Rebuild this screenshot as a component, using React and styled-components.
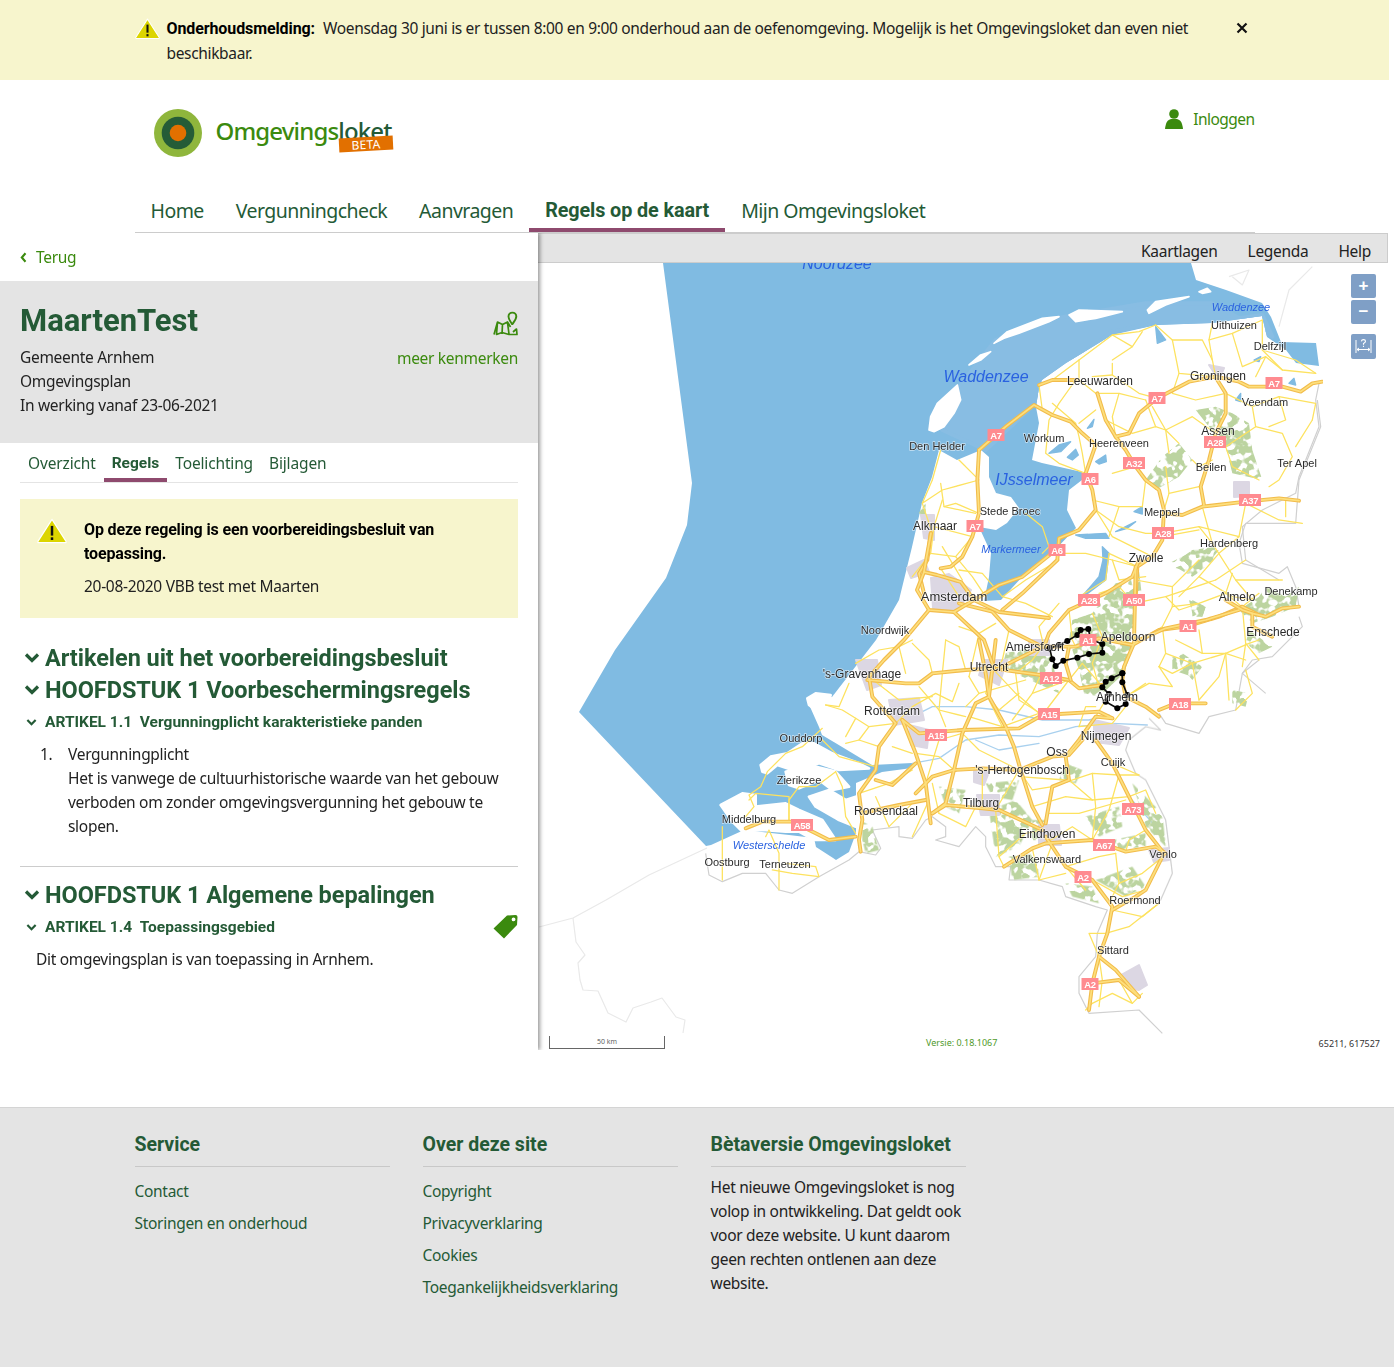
import React from "react";
import styled, { createGlobalStyle } from "styled-components";

const DARK = "#245a36";
const GREEN = "#3b8a0e";
const GREY = "#e4e4e4";
const CREAM = "#f7f5cd";
const PURPLE = "#8e4a6e";
const BOLD_FONT = `Roboto, "Noto Sans", sans-serif`;

const GlobalStyle = createGlobalStyle`
  html, body { margin: 0; padding: 0; background: #fff; }
  body {
    font-family: "Noto Sans", "Liberation Sans", sans-serif;
    font-size: 15.5px;
    line-height: 24px;
    letter-spacing: -0.3px;
    color: #222;
  }
  a { color: inherit; text-decoration: none; }
`;

// map data, in page pixels unless the group says otherwise
const SEA =
  "M664,263 L1192,263 L1197,280 L1227,290 L1263,303 L1272,317 L1282,342 L1317,343 L1320,366 L1297,363 L1287,350 L1268,337 L1263,316 L1213,323 L1157,325 L1113,335 L1067,363 L1043,380 L1040,387 L1037,407 L1040,423 L1033,460 L1043,463 L1083,472 L1083,480 L1070,490 L1068,510 L1077,528 L1053,553 L1023,577 L1002,600 L985,601 L990,577 L992,553 L980,527 L997,530 L1008,523 L1020,508 L1012,497 L997,493 L990,477 L990,457 L982,450 L958,460 L940,450 L933,477 L923,503 L913,547 L900,600 L877,640 L833,697 L808,700 L820,727 L823,735 L873,765 L913,763 L913,768 L883,772 L857,783 L857,793 L857,833 L850,852 L837,860 L817,847 L815,838 L790,835 L745,830 L712,845 L707,846 L580,712 L616,650 L667,578 L688,525 L693,483 Z";

const WADDEN_TINT = "320,570 470,430 490,370 700,215 830,190 1000,185 1150,165 1180,230 1000,130 800,130 500,180 350,240 240,380 245,430 190,510";
const ISLANDS_Z7 = [
  "345,250 385,215 490,175 540,170 510,185 420,220 375,235",
  "570,165 600,150 730,155 650,175 590,185",
  "805,150 830,125 930,110 860,135 810,160",
  "150,510 155,470 175,430 235,375 245,420 225,460 195,500 165,515",
  "270,315 305,285 335,275 305,300",
  "960,95 985,85 995,95 970,100",
];
const LAKES_Z7 = [
  "510,580 540,555 575,545 545,575",
  "565,592 590,568 598,585 580,600",
  "625,505 645,478 640,500",
  "650,605 680,585 682,605 660,612",
  "710,815 770,785 745,805",
  "765,755 790,740 790,762",
  "830,200 860,240 835,250",
  "1070,420 1085,400 1085,425",
  "1125,300 1145,290 1140,305",
  "1230,370 1245,355 1250,375",
  "590,825 680,820 690,835 620,835",
  "670,860 690,880 680,960 600,1020 660,950 672,900",
];
const DELTA_Z8 = [
  "185,375 215,350 265,340 310,310 345,310 400,340 480,370 510,385 420,390 360,370 320,385 280,390 235,375 205,400 190,395",
  "260,395 330,375 410,395 450,440 400,450 360,420 300,445 270,435",
  "330,470 390,450 440,480 470,470 470,560 420,540 350,500",
  "65,495 130,460 170,465 170,500 260,490 300,510 370,540 410,600 345,600 300,575 260,575 190,570 130,575 100,545",
  "325,175 350,160 395,165 385,195 350,210 330,195",
];

const BORDERS = [
  { scale: 1, x: 0, y: 0, light: true, pts: "540,927 574,918 607,900 650,875 708,848" },
  { scale: 1, x: 0, y: 0, light: true, pts: "574,918 577,942 586,955 579,963 581,980 584,990 599,991 609,1013 627,1022 634,1008 652,1002 663,998 677,1017 686,1020 684,1033" },
  { x: 700, y: 640, scale: 1 / 3, pts: "20,640 30,705 70,725 130,700 200,700 240,750 280,760 360,710 450,660 480,635 530,645 545,625 520,570 600,560 600,590 640,595 680,540 700,530 740,560 740,590 710,600 780,620 830,560 860,590 860,620 890,680 935,680 930,720 1020,720 1090,740 1100,770 1190,800 1225,810 1195,880 1190,950 1140,1010 1140,1060 1170,1120 1320,1110 1390,1180" },
  { x: 700, y: 640, scale: 1 / 3, pts: "1340,790 1385,780 1420,700 1400,540 1340,420 1310,400 1280,330 1290,300 1340,260 1385,270 1350,235" },
  { x: 960, y: 560, scale: 1 / 3, pts: "600,460 620,490 720,520 750,470 830,450 850,340 900,300" },
  { x: 1140, y: 400, scale: 1 / 3, pts: "480,620 470,560 445,500 420,520 310,490 300,430 320,370 470,370 480,240 545,80 535,0" },
  { x: 1140, y: 400, scale: 1 / 3, pts: "480,650 490,680 400,770 340,780 310,820 380,880" },
  { x: 880, y: 260, scale: 1 / 3, pts: "1320,370 1310,420 1320,500 1260,650 1250,700 1150,750 1090,800 1100,900 1200,960" },
  { x: 880, y: 260, scale: 1 / 3, light: true, pts: "1200,200 1230,90 1300,20" },
  { x: 880, y: 260, scale: 1 / 3, light: true, pts: "1050,50 1110,30 1090,75 1060,50" },
];

const FOREST_Z5 = [
  "340,180 400,160 470,70 520,60 525,250 495,340 420,410 375,400 360,330 330,240",
  "140,280 270,250 300,400 190,350 130,320",
  "700,120 740,140 730,170 700,170",
  "640,290 690,300 700,350 640,330",
  "820,390 870,400 860,440 820,430",
];
const FOREST_Z7 = [
  "800,660 850,590 900,550 940,600 900,650 830,690",
  "950,450 1010,440 1060,460 1110,490 1120,570 1150,660 1060,640 1040,560 990,500",
  "870,920 940,870 1010,860 1000,910 920,930",
  "110,770 140,730 140,780",
  "690,1010 780,930 790,1020",
];
const FOREST_Z8 = [
  "720,440 800,450 780,520 740,500",
  "860,430 960,420 940,480 880,470",
  "870,510 950,480 1000,540 960,620 890,650",
  "1100,370 1150,390 1130,430 1080,420",
  "1000,540 1040,540 1060,600 1000,600",
  "1100,730 1180,740 1200,790 1120,770",
  "1160,530 1260,500 1270,560 1200,590",
  "1300,430 1390,520 1400,620 1340,560 1320,490",
  "490,545 520,560 540,630 500,640 490,600",
  "930,650 1010,640 1020,710 940,720",
  "1240,600 1340,580 1340,620 1250,630",
  "1190,720 1300,680 1340,740 1280,770",
];
const FOREST_Z11 = [
  "90,490 150,460 240,450 190,510 160,530",
  "150,600 200,620 190,650 160,640",
  "300,630 340,670 400,650 470,620 480,560 440,590 380,560 360,590",
  "330,690 400,740 360,760 320,730",
  "130,760 190,800 160,840 110,780",
];

const URBAN = [
  "932,578 950,574 972,590 958,612 934,608",
  "1008,660 985,660 980,675 1000,685",
  "857,660 878,660 882,685 868,690",
  "890,700 920,698 925,720 895,725",
  "910,725 930,730 928,748 912,745",
  "1050,640 1030,640 1030,655 1050,655",
  "1095,720 1130,728 1120,745 1095,742",
  "975,770 990,772 985,785 975,782",
  "978,795 1000,795 1000,815 982,815",
  "1040,825 1060,825 1062,845 1040,845",
  "1235,482 1250,482 1250,496 1235,497",
  "1122,975 1140,965 1148,985 1140,990 1128,988",
  "1210,365 1225,368 1220,380",
  "922,515 935,515 935,540 925,538",
  "908,568 925,560 930,572 912,578",
  "1150,850 1170,848 1170,860 1155,862",
];

const MOTORWAYS = [
  { x: 880, y: 260, k: 3, pts: [
    "300,570 380,500 465,435 520,465 575,485 610,520 650,555 620,640 640,690 650,750 600,810 540,835 535,900 430,1000 370,1050",
    "655,400 680,480 710,530 740,570 770,620 800,660 840,690 855,750 850,840 820,890 775,920 770,1020",
    "710,530 750,520 780,460 835,415 930,365 1010,350 1080,365 1110,380 1210,380 1265,395 1300,370 1330,365",
    "1015,360 1040,400 1040,460 1010,520 990,600 965,680 975,735",
    "855,760 910,765 970,740 1100,725 1200,715 1260,722",
    "480,375 520,360 590,360",
    "300,570 295,660 300,760 280,830 250,890 215,920 185,925",
    "155,820 145,900 120,940 135,1000",
  ] },
  { x: 700, y: 640, k: 3, pts: [
    "505,120 620,130 660,130 700,100 800,90 880,85 1025,105 1110,120 1140,145 1210,135",
    "890,0 880,85 870,170 920,260 945,320 965,390 1000,500 1030,555",
    "840,0 860,100 870,170",
    "870,170 830,190 790,280 765,390 740,490 700,520",
    "610,240 660,280 790,270 960,265 1030,225 1200,215 1240,235",
    "610,240 650,340 680,430 695,550",
    "510,110 520,170 590,250 540,320 530,390 480,460 490,540 480,600 485,635",
    "490,520 530,510 600,495 680,480",
    "530,420 580,435 650,370",
    "650,460 700,410 765,390 850,385 960,390 1060,350 1110,345 1150,300",
    "700,520 740,495 850,505 900,510 1030,570",
    "1240,235 1190,230 1140,300 1100,350 1110,420 1060,440 1045,520 1040,550",
    "915,680 1000,625 1040,610 1180,600 1280,635 1370,620 1400,640",
    "1040,590 1100,680 1180,720 1240,800 1225,880 1200,950 1180,1030 1170,1110",
    "1190,300 1240,370 1290,470 1340,570 1395,640 1340,750 1310,770 1240,810",
    "1200,950 1250,990 1320,1070",
    "1180,1030 1260,1020 1320,1070",
    "140,565 190,545 280,545 350,580 390,600 470,590",
  ] },
  { x: 960, y: 560, k: 3, pts: [
    "540,0 520,50 440,100 330,150 270,220 255,260",
    "0,130 100,155 150,210 250,260 350,260 420,235 520,255 600,210 680,200 780,170 850,140 900,165",
    "530,20 525,250 495,320 490,360 500,410 560,440 600,470",
    "600,450 650,430 740,430",
    "330,260 320,310 335,360",
    "110,330 170,300 250,260",
  ] },
  { x: 1140, y: 400, k: 3, pts: [
    "260,600 310,630 340,640 380,650 430,625 480,620",
    "340,640 340,680 400,710",
    "0,720 80,685 200,660 300,630",
  ] },
  { x: 0, y: 0, k: 1, pts: [
    "925,572 918,590 930,610 955,612 975,600 962,582 938,575 925,572",
    "930,610 905,640 885,660 870,677",
    "955,612 985,640 995,668",
    "975,600 1000,585 1023,577 1053,553",
    "975,600 1000,612 1050,618",
    "925,572 928,555 932,533",
  ] },
];

const THIN_Z7 = [
  "480,375 490,450", "520,360 600,300 700,225 780,215 830,195", "600,300 600,360",
  "700,310 700,345 780,400 835,415", "700,225 760,260 790,215", "760,260 700,300",
  "600,360 650,400 720,400 800,420", "590,360 540,430 510,480 500,580 540,610 620,640",
  "590,490 600,530 610,580 620,640", "650,450 600,490", "680,480 760,520 830,500 860,510 900,550",
  "820,440 860,510 870,580", "880,240 900,340 1010,350", "830,195 880,240 970,240 1000,300 1010,350",
  "1000,190 990,240 1060,220 1150,180", "1060,220 1090,320 1160,290 1210,330 1310,340",
  "1150,180 1150,270 1210,330", "1040,400 1120,440 1200,410 1310,430 1300,480",
  "1120,440 1130,500 1040,560", "1130,500 1210,520 1240,590 1200,660 1170,680",
  "1040,560 1060,620 1140,660", "1010,520 940,470 860,510", "940,600 960,620 1000,600",
  "860,620 870,700 855,750", "700,640 770,620", "640,720 720,740 790,740",
  "650,750 720,800 800,820 850,820 960,800 1080,830 1100,730", "850,830 960,810",
  "1080,830 1020,880 960,950 900,1010", "960,800 1000,850 1070,960 1120,1020", "1220,715 1220,770",
  "160,660 185,570", "160,660 130,730 190,690 300,660", "185,670 195,740 290,760", "130,730 160,820",
  "190,720 165,800 155,880 230,890 280,830", "165,800 280,830", "190,860 250,960", "240,600 290,650",
  "440,760 490,800 510,860 490,880", "530,880 620,880 700,900 775,920", "775,920 690,880 680,960 600,1010",
  "820,890 700,830 650,750",
  "1150,270 1250,300 1310,340", "990,240 1000,300", "1160,290 1130,350", "900,340 880,400 950,420 1040,400",
  "700,345 640,350", "520,430 590,490", "720,400 700,470 710,530", "800,420 830,500",
  "1200,410 1220,480 1170,500", "1250,560 1300,480", "870,700 960,680", "970,740 1000,850",
  "1100,730 1200,780 1270,790", "790,740 800,660", "720,740 690,830", "300,760 230,730 195,740",
  "155,880 100,950", "230,890 280,950 320,1010", "185,925 240,1010", "960,950 1060,1010 1120,1020",
  "1070,960 1210,960", "700,900 720,960 800,950",
];
const THIN_Z8 = [
  "380,195 430,210 470,235 510,260 590,250", "370,265 310,320 260,340 205,395 185,440 150,465 165,500 140,530",
  "410,395 350,440 300,440 270,480 270,540", "410,395 430,440 440,530 470,580", "530,380 420,350 370,300",
  "540,320 480,300 440,310", "590,250 640,200 710,160 760,185 780,130", "510,110 600,180 700,170",
  "660,140 720,210 800,230", "700,100 690,60 640,10", "800,90 780,20 740,0", "470,70 540,30 600,20 640,0",
  "880,85 950,160 1020,220", "940,240 1000,160 1025,105", "790,280 840,330 900,360 960,390",
  "650,340 720,350 765,390", "530,470 570,560", "640,590 690,480", "700,430 720,520", "850,385 850,500",
  "890,510 960,390", "890,510 900,650 915,680", "960,410 1100,420", "1110,420 1180,480 1290,470",
  "1060,440 1180,400 1260,405 1320,405", "1260,405 1230,510 1180,600", "1180,400 1190,500 1180,600",
  "1050,520 1140,520 1280,480", "1250,640 1260,730 1330,700 1380,660", "1060,610 1020,720", "1100,680 1160,750",
  "1180,720 1270,770 1340,750", "1240,810 1330,830 1380,790", "1200,950 1210,1020 1200,1100",
  "1260,1020 1300,1090 1240,1060 1180,1090", "1150,300 1190,230 1220,180", "70,560 70,720", "150,480 170,460 270,470 270,540",
  "200,590 210,570 240,640 240,750", "350,680 360,710 280,700 220,690", "260,670 350,680",
  "600,20 620,100", "740,0 730,100 720,210 740,260", "880,85 860,160 900,210 960,160", "1000,160 1110,120",
  "1030,225 1110,120", "790,280 720,300 680,430", "580,320 640,340", "480,460 570,430 640,390",
  "570,560 640,490", "720,520 800,560 830,500", "960,390 1000,450 1060,440", "1000,500 1100,470 1180,480",
  "1040,610 1120,560 1180,600", "1100,680 1200,650 1250,640", "1000,625 1020,720 1100,700", "1260,730 1230,790",
  "1290,470 1340,450 1370,520", "1240,370 1320,405", "1340,570 1290,600 1280,635", "900,650 980,580 1030,570",
  "1220,880 1290,860 1380,790", "1225,880 1170,880 1200,950", "1300,1090 1330,1060", "1180,1090 1160,1110",
  "450,130 420,200 380,195", "470,235 440,290", "510,260 480,300",
];
const THIN_Z5 = [
  "530,60 640,80 640,140 610,200 620,280 600,320", "640,140 720,130 800,100 860,150", "610,200 530,250",
  "620,280 700,310 800,280 860,300", "700,310 720,420", "800,280 810,420", "525,130 620,110 770,60",
  "400,160 430,230 400,310 420,380", "330,150 340,240 350,260", "720,210 730,280 800,280 870,250 900,240",
  "850,140 860,250 850,320", "0,30 70,40 130,110 200,60 300,0", "130,110 200,130 280,170", "150,210 130,300 100,340",
  "250,260 220,300 170,340", "330,360 370,310 430,380", "560,370 500,410 570,370", "100,340 90,420 130,500",
  "500,440 460,490 360,500", "0,200 60,220 110,190", "30,350 60,400 20,440", "860,330 880,400 830,450",
  "620,110 660,150 720,130", "700,310 640,340 600,320", "730,280 650,240", "770,60 860,0", "640,80 720,0",
  "800,100 820,40", "525,130 480,80 420,100", "255,260 240,200 300,130", "430,230 520,250", "900,100 850,140",
  "860,250 900,300", "800,280 780,350 720,420", "60,220 30,350", "60,400 200,360", "170,340 180,420 260,470",
  "30,470 130,500 240,460", "360,500 380,440 410,440", "600,320 640,380 570,370",
];
const RIVERS_Z8 = [
  "640,370 720,355 800,300 900,285 1020,290 1130,260 1240,250 1345,255",
  "600,250 700,200 800,200 900,210 1030,240 1170,240 1230,225",
  "830,300 900,330 1020,310",
  "1240,370 1290,470 1370,560",
];

const ZOOMS = { z7: [880, 260], z8: [700, 640], z5: [960, 560], z11: [1140, 400] };
const inZoom = (z) => `translate(${ZOOMS[z][0]} ${ZOOMS[z][1]}) scale(0.33333)`;

const SHIELDS = [
  ["A7", 1275, 383], ["A7", 1158, 398], ["A7", 997, 435], ["A32", 1135, 463], ["A28", 1216, 442], ["A6", 1091, 479],
  ["A37", 1251, 500], ["A28", 1164, 533], ["A7", 976, 526], ["A6", 1058, 550], ["A28", 1090, 600], ["A50", 1135, 600],
  ["A1", 1189, 626], ["A1", 1089, 640], ["A12", 1052, 678], ["A15", 1050, 714], ["A15", 937, 735], ["A18", 1181, 704],
  ["A58", 803, 825], ["A73", 1134, 809], ["A67", 1105, 845], ["A2", 1084, 877], ["A2", 1091, 984],
];

const PLACES = [
  ["Uithuizen", 1235, 325, 11], ["Delfzijl", 1271, 346, 11], ["Leeuwarden", 1101, 381, 12], ["Groningen", 1219, 376, 12],
  ["Veendam", 1266, 402, 11], ["Workum", 1045, 438, 11], ["Den Helder", 938, 446, 11], ["Heerenveen", 1120, 443, 11],
  ["Assen", 1219, 431, 12], ["Beilen", 1212, 467, 11], ["Ter Apel", 1298, 463, 11], ["Stede Broec", 1011, 511, 11],
  ["Meppel", 1163, 512, 11], ["Alkmaar", 936, 526, 12], ["Hardenberg", 1230, 543, 11], ["Zwolle", 1147, 558, 12],
  ["Denekamp", 1292, 591, 11], ["Almelo", 1238, 597, 12], ["Amsterdam", 955, 596, 13], ["Noordwijk", 886, 630, 11],
  ["Apeldoorn", 1129, 637, 12], ["Amersfoort", 1036, 647, 12], ["Enschede", 1274, 632, 12], ["Utrecht", 990, 667, 12],
  ["'s-Gravenhage", 863, 674, 12], ["Arnhem", 1118, 697, 12], ["Rotterdam", 893, 711, 12], ["Ouddorp", 802, 738, 11],
  ["Nijmegen", 1107, 736, 12], ["Oss", 1058, 752, 12], ["Cuijk", 1114, 762, 11], ["'s-Hertogenbosch", 1023, 770, 12],
  ["Zierikzee", 800, 780, 11], ["Tilburg", 982, 803, 12], ["Roosendaal", 887, 811, 12], ["Middelburg", 750, 819, 11],
  ["Eindhoven", 1048, 834, 12], ["Venlo", 1164, 854, 11], ["Valkenswaard", 1048, 859, 11], ["Oostburg", 728, 862, 11],
  ["Terneuzen", 786, 864, 11], ["Roermond", 1136, 900, 11], ["Sittard", 1114, 950, 11],
];
const WATERS = [
  ["Noordzee", 838, 269, 16], ["Waddenzee", 1242, 311, 11], ["Waddenzee", 987, 382, 16], ["IJsselmeer", 1035, 485, 16],
  ["Markermeer", 1012, 553, 11], ["Westerschelde", 770, 849, 11],
];

const VBB_Z5 = [
  "272,265 300,255 325,243 355,225 365,210 388,207 395,238 430,252 430,278 390,282 355,293 313,302 290,318 280,298 272,265",
  "490,340 458,355 440,365 430,382 450,402 440,425 475,445 500,432 505,405 490,367 490,340",
];

const Polys = ({ items, fill, round = 0 }) =>
  items.map((p) => <polygon key={p} points={p} fill={fill} stroke={round ? fill : "none"} strokeWidth={round} strokeLinejoin="round" />);
const Lines = ({ items, stroke, width }) =>
  items.map((p) => <polyline key={p} points={p} fill="none" stroke={stroke} strokeWidth={width} strokeLinejoin="round" strokeLinecap="round" />);

function DutchMap() {
  return (
    <MapSvg viewBox="539 263 849 787">
      <defs>
        <filter id="soft" x="0" y="0" width="100%" height="100%">
          <feGaussianBlur stdDeviation="0.32" />
        </filter>
        <filter id="mottle" x="-5%" y="-5%" width="110%" height="110%">
          <feTurbulence type="fractalNoise" baseFrequency="0.13" numOctaves="2" seed="4" result="n" />
          <feColorMatrix in="n" type="matrix" values="0 0 0 0 0  0 0 0 0 0  0 0 0 0 0  7 7 0 0 -6.1" result="m" />
          <feComposite in="SourceGraphic" in2="m" operator="in" />
        </filter>
        <clipPath id="seaClip"><path d={SEA} /></clipPath>
      </defs>
      <g filter="url(#soft)">
        <path d={SEA} fill="#80bbe2" />
        <g clipPath="url(#seaClip)">
          <g transform={inZoom("z7")}>
            <polygon points={WADDEN_TINT} fill="#88bde3" stroke="#88bde3" strokeWidth="12" strokeLinejoin="round" />
          </g>
        </g>
        <g transform={inZoom("z7")}>
          <Polys items={ISLANDS_Z7} fill="#fff" round={5} />
          <Polys items={LAKES_Z7} fill="#80bbe2" round={4} />
        </g>
        <g transform={inZoom("z8")}>
          <Polys items={DELTA_Z8} fill="#fff" round={8} />
          <Lines items={RIVERS_Z8} stroke="#a8d0ee" width={4} />
        </g>
        <g fill="none" strokeWidth="1.2" strokeLinejoin="round">
          {BORDERS.map((b) => (
            <g key={b.pts} transform={`translate(${b.x} ${b.y}) scale(${b.scale})`}>
              <polyline points={b.pts} stroke={b.light ? "#e9e9e9" : "#d0d0d0"} vectorEffect="non-scaling-stroke" />
            </g>
          ))}
        </g>
        <g filter="url(#mottle)">
          <g transform={inZoom("z5")}><Polys items={FOREST_Z5} fill="#bcd4a0" /></g>
          <g transform={inZoom("z7")}><Polys items={FOREST_Z7} fill="#bcd4a0" /></g>
          <g transform={inZoom("z8")}><Polys items={FOREST_Z8} fill="#bcd4a0" /></g>
          <g transform={inZoom("z11")}><Polys items={FOREST_Z11} fill="#bcd4a0" /></g>
        </g>
        <Polys items={URBAN} fill="#dcd7e3" round={2} />
        <g transform={inZoom("z7")}><Lines items={THIN_Z7} stroke="#fde25f" width={3.8} /></g>
        <g transform={inZoom("z8")}><Lines items={THIN_Z8} stroke="#fde25f" width={3.8} /></g>
        <g transform={inZoom("z5")}><Lines items={THIN_Z5} stroke="#fde25f" width={3.8} /></g>
        {MOTORWAYS.map((m) => (
          <g key={m.x} transform={`translate(${m.x} ${m.y}) scale(${1 / m.k})`}>
            <Lines items={m.pts} stroke="#f2bc4b" width={3.9 * m.k} />
            <Lines items={m.pts} stroke="#fddf7d" width={1.7 * m.k} />
          </g>
        ))}
        <g transform={inZoom("z5")}>
          {VBB_Z5.map((loop) => (
            <g key={loop}>
              <polyline points={loop} fill="none" stroke="#111" strokeWidth="5" />
              {loop.split(" ").map((pt) => {
                const [cx, cy] = pt.split(",");
                return <circle key={pt} cx={cx} cy={cy} r="9" fill="#000" />;
              })}
            </g>
          ))}
        </g>
        {SHIELDS.map(([label, x, y]) => (
          <g key={label + x}>
            <rect x={x - (label.length > 2 ? 11 : 8.5)} y={y - 6} width={label.length > 2 ? 22 : 17} height="12" fill="#ff8b90" />
            <ShieldText x={x} y={y + 3.6}>{label}</ShieldText>
          </g>
        ))}
        {PLACES.map(([label, x, y, size]) => (
          <PlaceText key={label} x={x} y={y + size * 0.35} $size={size}>{label}</PlaceText>
        ))}
        {WATERS.map(([label, x, y, size]) => (
          <WaterText key={label + x} x={x} y={y} $size={size}>{label}</WaterText>
        ))}
      </g>
    </MapSvg>
  );
}

const Warning = ({ size }) => (
  <svg width={size} height={size * 0.85} viewBox="0 0 34 29">
    <path d="M17 1.5 L33 26.5 Q33.5 28 32 28 L2 28 Q0.5 28 1 26.5 Z" fill="#dcd500" stroke="#fff" strokeWidth="1.4" strokeLinejoin="round" />
    <rect x="15.6" y="9" width="2.8" height="11" fill="#111" />
    <rect x="15.6" y="22" width="2.8" height="3" fill="#111" />
  </svg>
);

const Chevron = ({ size, weight = 3.2 }) => (
  <svg width={size} height={size} viewBox="0 0 16 16">
    <polyline points="2,4.5 8,10.5 14,4.5" fill="none" stroke="currentColor" strokeWidth={weight} />
  </svg>
);

const BackChevron = () => (
  <svg width="7" height="11" viewBox="0 0 7 11">
    <polyline points="5.5,1.2 1.8,5.5 5.5,9.8" fill="none" stroke="currentColor" strokeWidth="2.1" />
  </svg>
);

export default function App() {
  return (
    <>
      <GlobalStyle />
      <Page>
        <Banner>
          <BannerInner>
            <BannerIcon><Warning size={25} /></BannerIcon>
            <BannerText>
              <strong>Onderhoudsmelding:</strong>Woensdag 30 juni is er tussen 8:00 en 9:00 onderhoud aan de oefenomgeving. Mogelijk is het Omgevingsloket dan even niet beschikbaar.
            </BannerText>
            <CloseIcon viewBox="0 0 12 12">
              <path d="M1.5 1.5 L10.5 10.5 M10.5 1.5 L1.5 10.5" stroke="#111" strokeWidth="2.2" />
            </CloseIcon>
          </BannerInner>
        </Banner>

        <Header>
          <Logo>
            <svg width="48" height="48" viewBox="0 0 48 48">
              <circle cx="24" cy="24" r="24" fill="#8fb63c" />
              <circle cx="24" cy="24" r="16.3" fill="#255c37" />
              <circle cx="24" cy="24" r="8.3" fill="#e27000" />
            </svg>
            <LogoText>Omgevings<LogoDark>loket</LogoDark></LogoText>
            <BetaBadge>BETA</BetaBadge>
          </Logo>
          <Login>
            <svg width="18" height="20" viewBox="0 0 18 20">
              <circle cx="9" cy="5" r="4.8" fill={GREEN} />
              <path d="M0 20 Q0 18.6 1 15 Q2 11 6 10 L12 10 Q16 11 17 15 Q18 18.6 18 20 Z" fill={GREEN} />
            </svg>
            Inloggen
          </Login>
        </Header>

        <Nav>
          <NavItem>Home</NavItem>
          <NavItem>Vergunningcheck</NavItem>
          <NavItem>Aanvragen</NavItem>
          <NavItem $active>Regels op de kaart</NavItem>
          <NavItem>Mijn Omgevingsloket</NavItem>
        </Nav>

        <Main>
          <Side>
            <BackRow><BackChevron /><span>Terug</span></BackRow>
            <Summary>
              <SummaryText>
                <Title>MaartenTest</Title>
                <div>Gemeente Arnhem</div>
                <div>Omgevingsplan</div>
                <div>In werking vanaf 23-06-2021</div>
              </SummaryText>
              <SummaryAside>
                <svg width="25" height="25" viewBox="0 0 25 25" fill="none" stroke={GREEN} strokeWidth="1.7">
                  <path d="M1 23.5 L4.5 11 L9.5 13.5 L14.5 11 L17.5 16 M9.5 13.5 L9 23 M14.5 11.5 L16 23 M4.5 11 L3.5 23.5 L9 21.5 L16 23.5 L24 23.5 L23.5 18 L20 21" strokeLinejoin="round" />
                  <path d="M19 13 C16.5 9.5 15.5 8 15.5 5.5 A3.8 3.8 0 0 1 23.3 5.5 C23.3 8 21.5 10 19.5 13 Z" fill="none" strokeWidth="1.9" />
                </svg>
                <span>meer kenmerken</span>
              </SummaryAside>
            </Summary>
            <Tabs>
              <Tab>Overzicht</Tab>
              <Tab $active>Regels</Tab>
              <Tab>Toelichting</Tab>
              <Tab>Bijlagen</Tab>
            </Tabs>
            <Notice>
              <NoticeIcon><Warning size={30} /></NoticeIcon>
              <div>
                <NoticeTitle>Op deze regeling is een voorbereidingsbesluit van toepassing.</NoticeTitle>
                <div>20-08-2020 VBB test met Maarten</div>
              </div>
            </Notice>

            <Section>
              <BigHeading><Chevron size={16} /><span>Artikelen uit het voorbereidingsbesluit</span></BigHeading>
              <BigHeading><Chevron size={16} /><span>HOOFDSTUK 1 Voorbeschermingsregels</span></BigHeading>
              <SmallHeading $gap><Chevron size={11} /><span>ARTIKEL 1.1 &nbsp;Vergunningplicht karakteristieke panden</span></SmallHeading>
              <ListRow>
                <span>1.</span>
                <div>Vergunningplicht<br />Het is vanwege de cultuurhistorische waarde van het gebouw verboden om zonder omgevingsvergunning het gebouw te slopen.</div>
              </ListRow>
            </Section>
            <Section $divided>
              <BigHeading><Chevron size={16} /><span>HOOFDSTUK 1 Algemene bepalingen</span></BigHeading>
              <SmallHeading $gap>
                <Chevron size={11} /><span>ARTIKEL 1.4 &nbsp;Toepassingsgebied</span>
                <TagIcon viewBox="0 0 25 25">
                  <path d="M14 1.5 L22.5 1 Q24.5 1 24.5 3 L24 11 L11 24.5 L0.5 14.5 Z M20.5 3.5 A1.9 1.9 0 1 0 20.6 7.3 A1.9 1.9 0 1 0 20.5 3.5 Z" fill={GREEN} fillRule="evenodd" />
                </TagIcon>
              </SmallHeading>
              <Paragraph>Dit omgevingsplan is van toepassing in Arnhem.</Paragraph>
            </Section>
          </Side>

          <MapColumn>
            <MapToolbar>
              <MapTool>Kaartlagen</MapTool>
              <MapTool>Legenda</MapTool>
              <MapTool>Help</MapTool>
            </MapToolbar>
            <MapArea>
              <DutchMap />
              <ZoomControls>
                <ZoomButton>+</ZoomButton>
                <ZoomButton>&minus;</ZoomButton>
                <ScaleButton>
                  <svg width="17" height="17" viewBox="0 0 17 17" fill="none" stroke="#fff" strokeWidth="1">
                    <path d="M1 2 V15 M16 2 V15 M2 11.5 H15 M2 11.5 L4 10 M2 11.5 L4 13 M15 11.5 L13 10 M15 11.5 L13 13" />
                    <path d="M6.4 3.4 Q6.6 1.6 8.5 1.6 Q10.5 1.6 10.5 3.3 Q10.5 4.6 8.5 5.4 V6.8 M8.5 7.8 V9" strokeWidth="1.1" />
                  </svg>
                </ScaleButton>
              </ZoomControls>
              <ScaleBar>50 km</ScaleBar>
              <Version>Versie: 0.18.1067</Version>
              <Coords>65211, 617527</Coords>
            </MapArea>
          </MapColumn>
        </Main>

        <Footer>
          <FooterInner>
            <FooterCol>
              <FooterTitle>Service</FooterTitle>
              <FooterLinks>
                <a href="#contact">Contact</a>
                <a href="#storingen">Storingen en onderhoud</a>
              </FooterLinks>
            </FooterCol>
            <FooterCol>
              <FooterTitle>Over deze site</FooterTitle>
              <FooterLinks>
                <a href="#copyright">Copyright</a>
                <a href="#privacy">Privacyverklaring</a>
                <a href="#cookies">Cookies</a>
                <a href="#toegankelijkheid">Toegankelijkheidsverklaring</a>
              </FooterLinks>
            </FooterCol>
            <FooterCol>
              <FooterTitle>Bètaversie Omgevingsloket</FooterTitle>
              <FooterText>Het nieuwe Omgevingsloket is nog volop in ontwikkeling. Dat geldt ook voor deze website. U kunt daarom geen rechten ontlenen aan deze website.</FooterText>
            </FooterCol>
          </FooterInner>
        </Footer>
      </Page>
    </>
  );
}

const Page = styled.div`
  width: 1389px;
`;

const Banner = styled.div`
  height: 80px;
  background: ${CREAM};
`;
const BannerInner = styled.div`
  width: 1120px;
  margin: 0 auto;
  padding-top: 16px;
  display: flex;
`;
const BannerIcon = styled.div`
  width: 32px;
  flex: none;
  padding-top: 2px;
  svg { display: block; }
`;
const BannerText = styled.div`
  width: 1040px;
  letter-spacing: -0.34px;
  strong {
    font-family: ${BOLD_FONT};
    font-size: 16px;
    font-weight: 700;
    letter-spacing: -0.1px;
    color: #000;
    margin-right: 8px;
  }
`;
const CloseIcon = styled.svg`
  width: 12px;
  height: 12px;
  margin: 6px 0 0 29px;
  flex: none;
`;

const Header = styled.header`
  width: 1120px;
  height: 110px;
  margin: 0 auto;
  display: flex;
  justify-content: space-between;
  align-items: flex-start;
`;
const Logo = styled.div`
  position: relative;
  display: flex;
  align-items: center;
  gap: 14px;
  margin: 29px 0 0 19px;
`;
const LogoText = styled.span`
  font-size: 24px;
  font-weight: 500;
  letter-spacing: -0.85px;
  line-height: 36px;
  color: ${GREEN};
  margin-top: -4px;
`;
const LogoDark = styled.span`
  color: ${DARK};
`;
const BetaBadge = styled.span`
  position: absolute;
  left: 185px;
  top: 28px;
  width: 54px;
  height: 14px;
  background: #e27000;
  color: #fff;
  font-size: 12px;
  line-height: 15px;
  letter-spacing: 0.3px;
  text-align: center;
  transform: rotate(-3deg);
`;
const Login = styled.div`
  display: flex;
  align-items: center;
  gap: 10px;
  margin: 27px 0 0;
  letter-spacing: -0.55px;
  color: ${GREEN};
`;

const Nav = styled.nav`
  width: 1120px;
  height: 43px;
  margin: 0 auto;
  display: flex;
  box-sizing: border-box;
  border-bottom: 1px solid #ccc;
`;
const NavItem = styled.div`
  height: 42px;
  box-sizing: border-box;
  padding: 6px 16px 0;
  font-family: ${(p) => (p.$active ? BOLD_FONT : "inherit")};
  font-size: ${(p) => (p.$active ? "19.8px" : "19.5px")};
  line-height: 30px;
  letter-spacing: ${(p) => (p.$active ? "-0.1px" : "-0.55px")};
  white-space: nowrap;
  color: ${DARK};
  font-weight: ${(p) => (p.$active ? 700 : 400)};
  border-bottom: ${(p) => (p.$active ? `4px solid ${PURPLE}` : "none")};
`;

const Main = styled.main`
  display: flex;
  height: 817px;
  margin-bottom: 57px;
`;
const Side = styled.aside`
  width: 538px;
  flex: none;
  position: relative;
  z-index: 1;
  box-shadow: 2px 0 4px rgba(0, 0, 0, 0.4);
  clip-path: inset(0 -10px 0 0);
  background: #fff;
`;
const BackRow = styled.div`
  height: 48px;
  padding-left: 20px;
  display: flex;
  align-items: center;
  gap: 9px;
  color: ${GREEN};
`;
const Summary = styled.section`
  height: 162px;
  box-sizing: border-box;
  padding: 20px 20px 0;
  background: ${GREY};
  display: flex;
  justify-content: space-between;
`;
const SummaryText = styled.div``;
const Title = styled.h1`
  margin: 0 0 4px;
  font-family: ${BOLD_FONT};
  font-size: 31px;
  line-height: 40px;
  letter-spacing: 0;
  font-weight: 700;
  color: ${DARK};
`;
const SummaryAside = styled.div`
  display: flex;
  flex-direction: column;
  align-items: flex-end;
  gap: 10px;
  padding-top: 10px;
  color: ${GREEN};
`;
const Tabs = styled.div`
  margin: 0 20px;
  height: 40px;
  box-sizing: border-box;
  border-bottom: 1px solid ${GREY};
  display: flex;
`;
const Tab = styled.div`
  height: 39px;
  box-sizing: border-box;
  padding: 8px 8px 0;
  color: ${DARK};
  font-family: ${(p) => (p.$active ? BOLD_FONT : "inherit")};
  font-size: 15.5px;
  font-weight: ${(p) => (p.$active ? 700 : 400)};
  letter-spacing: ${(p) => (p.$active ? "0" : "-0.15px")};
  border-bottom: ${(p) => (p.$active ? `4px solid ${PURPLE}` : "none")};
`;
const Notice = styled.div`
  margin: 16px 20px 0;
  height: 119px;
  box-sizing: border-box;
  padding: 19px 20px 0 17px;
  background: ${CREAM};
  color: #222;
  display: flex;
`;
const NoticeIcon = styled.div`
  width: 47px;
  flex: none;
`;
const NoticeTitle = styled.div`
  font-family: ${BOLD_FONT};
  font-size: 16px;
  font-weight: 700;
  letter-spacing: -0.15px;
  color: #000;
  margin-bottom: 8px;
`;
const Section = styled.section`
  margin: ${(p) => (p.$divided ? "0" : "24px")} 20px 0;
  padding-top: ${(p) => (p.$divided ? "12px" : "0")};
  border-top: ${(p) => (p.$divided ? "1px solid #ccc" : "none")};
  padding-bottom: ${(p) => (p.$divided ? "0" : "28px")};
  color: #222;
`;
const BigHeading = styled.h2`
  margin: 0;
  height: 32px;
  padding-left: 4px;
  display: flex;
  align-items: center;
  gap: 5px;
  font-family: ${BOLD_FONT};
  font-size: 23.5px;
  line-height: 32px;
  letter-spacing: -0.05px;
  font-weight: 700;
  color: ${DARK};
  white-space: nowrap;
`;
const SmallHeading = styled.h3`
  margin: ${(p) => (p.$gap ? "1px" : "0")} 0 0;
  height: 30px;
  padding-left: 6px;
  display: flex;
  align-items: center;
  gap: 8px;
  font-family: ${BOLD_FONT};
  font-size: 15.5px;
  letter-spacing: 0;
  font-weight: 700;
  color: ${DARK};
  position: relative;
`;
const TagIcon = styled.svg`
  position: absolute;
  right: 0;
  top: 2px;
  width: 25px;
  height: 25px;
`;
const ListRow = styled.div`
  margin: 5px 0 0 20px;
  display: flex;
  span { width: 28px; flex: none; }
`;
const Paragraph = styled.p`
  margin: 5px 0 0 16px;
`;

const MapColumn = styled.div`
  width: 850px;
  display: flex;
  flex-direction: column;
`;
const MapToolbar = styled.div`
  height: 30px;
  box-sizing: border-box;
  padding: 5px 16px 0 0;
  background: ${GREY};
  border: 1px solid #ccc;
  border-left: none;
  display: flex;
  justify-content: flex-end;
  gap: 30px;
`;
const MapTool = styled.div`
  line-height: 24px;
  color: #222;
`;
const MapArea = styled.div`
  position: relative;
  height: 787px;
  overflow: hidden;
`;
const MapSvg = styled.svg`
  display: block;
  width: 849px;
  height: 787px;
`;
const ShieldText = styled.text`
  font-family: "Liberation Sans", sans-serif;
  font-size: 9.5px;
  font-weight: 700;
  fill: #fff;
  text-anchor: middle;
`;
const PlaceText = styled.text`
  font-family: "Liberation Sans", sans-serif;
  font-size: ${(p) => p.$size}px;
  letter-spacing: 0;
  fill: #2b2b2b;
  text-anchor: middle;
  stroke: rgba(255, 255, 255, 0.6);
  stroke-width: 1.4px;
  paint-order: stroke;
`;
const WaterText = styled.text`
  font-family: "Liberation Sans", sans-serif;
  font-size: ${(p) => p.$size}px;
  font-style: italic;
  letter-spacing: 0;
  fill: #2a62e0;
  text-anchor: middle;
`;
const ZoomControls = styled.div`
  position: absolute;
  top: 11px;
  left: 813px;
  width: 25px;
  display: flex;
  flex-direction: column;
  gap: 2px;
`;
const ZoomButton = styled.div`
  height: 24px;
  background: #7f9fc6;
  color: #fff;
  font-family: "Liberation Sans", sans-serif;
  font-size: 17px;
  font-weight: 700;
  line-height: 24px;
  letter-spacing: 0;
  text-align: center;
  border-radius: 2px;
`;
const ScaleButton = styled.div`
  height: 25px;
  margin-top: 8px;
  background: #7f9fc6;
  border-radius: 2px;
  display: flex;
  align-items: center;
  justify-content: center;
`;
const ScaleBar = styled.div`
  position: absolute;
  left: 11px;
  top: 773px;
  width: 114px;
  height: 12px;
  border: 1px solid #666;
  border-top: none;
  font-family: "Open Sans", sans-serif;
  font-size: 7px;
  line-height: 12px;
  letter-spacing: 0;
  color: #555;
  text-align: center;
`;
const Version = styled.div`
  position: absolute;
  left: 388px;
  top: 773px;
  font-size: 9px;
  line-height: 14px;
  letter-spacing: 0;
  color: #4f9a2a;
`;
const Coords = styled.div`
  position: absolute;
  right: 8px;
  top: 774px;
  font-size: 9px;
  line-height: 14px;
  letter-spacing: 0;
  color: #333;
`;

const Footer = styled.footer`
  height: 260px;
  box-sizing: border-box;
  border-top: 1px solid #d4d4d4;
  background: ${GREY};
  width: 1394px;
`;
const FooterInner = styled.div`
  width: 1120px;
  margin-left: 134.5px;
  display: flex;
  gap: 33px;
  padding-top: 22px;
`;
const FooterCol = styled.div`
  width: 255px;
`;
const FooterTitle = styled.h4`
  margin: 0;
  height: 37px;
  box-sizing: border-box;
  border-bottom: 1px solid #c8c8c8;
  font-family: ${BOLD_FONT};
  font-size: 19.5px;
  line-height: 30px;
  letter-spacing: 0;
  font-weight: 700;
  color: ${DARK};
  white-space: nowrap;
`;
const FooterLinks = styled.div`
  padding-top: 12px;
  display: flex;
  flex-direction: column;
  gap: 8px;
  color: ${DARK};
`;
const FooterText = styled.p`
  margin: 8px 0 0;
  color: #222;
`;
